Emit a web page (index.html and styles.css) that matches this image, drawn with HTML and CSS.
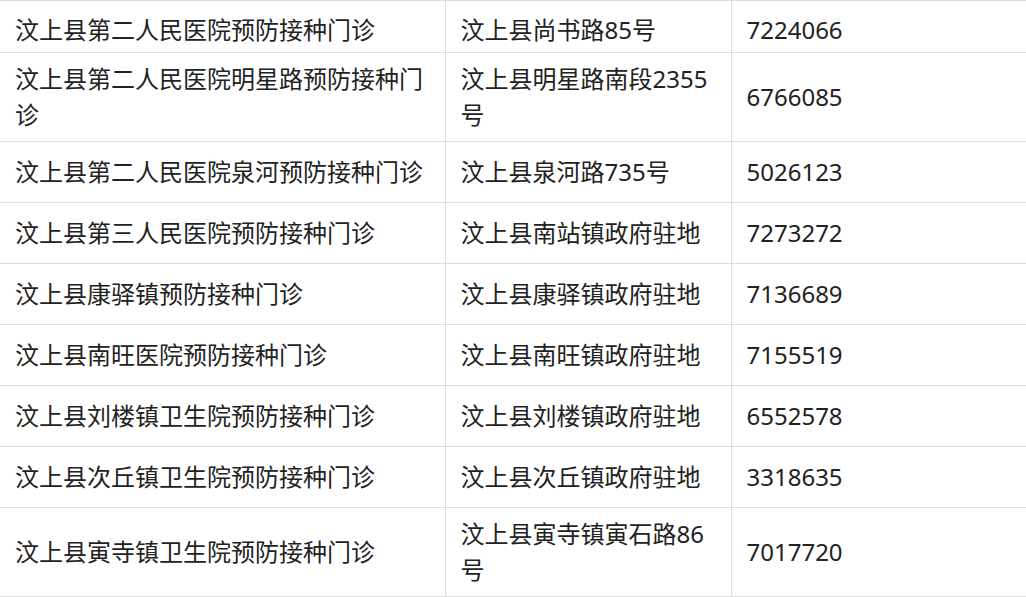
FILE: index.html
```html
<!DOCTYPE html>
<html lang="zh-CN">
<head>
<meta charset="utf-8">
<title>汶上县预防接种门诊</title>
<link rel="stylesheet" href="styles.css">
</head>
<body>
<table class="clinics">
  <colgroup>
    <col class="col-name">
    <col class="col-addr">
    <col class="col-tel">
  </colgroup>
  <tbody>
    <tr class="first"><td>汶上县第二人民医院预防接种门诊</td><td>汶上县尚书路85号</td><td>7224066</td></tr>
    <tr><td>汶上县第二人民医院明星路预防接种门诊</td><td>汶上县明星路南段2355号</td><td>6766085</td></tr>
    <tr><td>汶上县第二人民医院泉河预防接种门诊</td><td>汶上县泉河路735号</td><td>5026123</td></tr>
    <tr><td>汶上县第三人民医院预防接种门诊</td><td>汶上县南站镇政府驻地</td><td>7273272</td></tr>
    <tr><td>汶上县康驿镇预防接种门诊</td><td>汶上县康驿镇政府驻地</td><td>7136689</td></tr>
    <tr><td>汶上县南旺医院预防接种门诊</td><td>汶上县南旺镇政府驻地</td><td>7155519</td></tr>
    <tr><td>汶上县刘楼镇卫生院预防接种门诊</td><td>汶上县刘楼镇政府驻地</td><td>6552578</td></tr>
    <tr><td>汶上县次丘镇卫生院预防接种门诊</td><td>汶上县次丘镇政府驻地</td><td>3318635</td></tr>
    <tr><td>汶上县寅寺镇卫生院预防接种门诊</td><td>汶上县寅寺镇寅石路86号</td><td>7017720</td></tr>
  </tbody>
</table>
</body>
</html>
```
FILE: styles.css
```css
html, body {
  margin: 0;
  padding: 0;
  background: #ffffff;
}

.clinics {
  width: 1026px;
  border-collapse: collapse;
  table-layout: fixed;
  font-family: "Noto Sans", "Noto Sans CJK SC", sans-serif;
  font-size: 24px;
  line-height: 36px;
  color: #222222;
}

.col-name { width: 445px; }
.col-addr { width: 286px; }
.col-tel { width: auto; }

.clinics td {
  height: 44px;
  padding: 8px 15px;
  vertical-align: middle;
  border-top: 1px solid #dddddd;
  border-bottom: 1px solid #dddddd;
  border-left: 1px solid #dddddd;
  text-align: left;
}

.clinics td:first-child {
  border-left: none;
}

.clinics tr.first td {
  height: 34px;
  padding-top: 11px;
  padding-bottom: 4px;
}
```
